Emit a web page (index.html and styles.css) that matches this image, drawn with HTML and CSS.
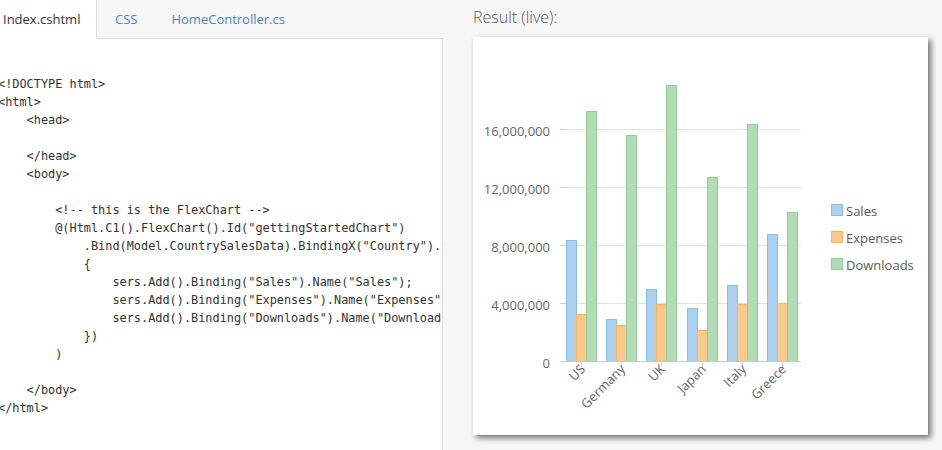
FILE: index.html
```html
<!DOCTYPE html>
<html>
<head>
<meta charset="utf-8">
<link rel="stylesheet" href="styles.css">
</head>
<body>
<div class="page">
  <section class="editor">
    <nav class="tabs">
      <span class="tab active">Index.cshtml</span>
      <span class="tab">CSS</span>
      <span class="tab">HomeController.cs</span>
      <span class="tab-fill"></span>
    </nav>
    <div class="code-panel">
<pre class="code">&lt;!DOCTYPE html&gt;
&lt;html&gt;
    &lt;head&gt;

    &lt;/head&gt;
    &lt;body&gt;

        &lt;!-- this is the FlexChart --&gt;
        @(Html.C1().FlexChart().Id("gettingStartedChart")
            .Bind(Model.CountrySalesData).BindingX("Country").Series(sers =&gt;
            {
                sers.Add().Binding("Sales").Name("Sales");
                sers.Add().Binding("Expenses").Name("Expenses");
                sers.Add().Binding("Downloads").Name("Downloads");
            })
        )

    &lt;/body&gt;
&lt;/html&gt;</pre>
    </div>
  </section>
  <section class="result">
    <h2 class="result-title">Result (live):</h2>
    <div class="chart-card">
      <svg class="chart" width="455" height="398" viewBox="0 0 455 398" xmlns="http://www.w3.org/2000/svg">
        <g class="grid">
          <line x1="87" y1="92.5" x2="328" y2="92.5"/>
          <line x1="87" y1="150.5" x2="328" y2="150.5"/>
          <line x1="87" y1="208.5" x2="328" y2="208.5"/>
          <line x1="87" y1="266.5" x2="328" y2="266.5"/>
        </g>
        <g class="yticks">
          <line x1="87" y1="92.5" x2="93" y2="92.5"/>
          <line x1="87" y1="150.5" x2="93" y2="150.5"/>
          <line x1="87" y1="208.5" x2="93" y2="208.5"/>
          <line x1="87" y1="266.5" x2="93" y2="266.5"/>
          <line x1="87" y1="324.5" x2="93" y2="324.5"/>
        </g>
        <g class="ylabels">
          <text x="77" y="98.5">16,000,000</text>
          <text x="77" y="156.5">12,000,000</text>
          <text x="77" y="214.5">8,000,000</text>
          <text x="77" y="272.5">4,000,000</text>
          <text x="77" y="330.5">0</text>
        </g>
        <g class="bars">
          <!-- US -->
          <rect class="s" x="93.5" y="203.5" width="10" height="121"/>
          <rect class="e" x="103.5" y="277.5" width="10" height="47"/>
          <rect class="d" x="113.5" y="74.5" width="10" height="250"/>
          <!-- Germany -->
          <rect class="s" x="133.5" y="282.5" width="10" height="42"/>
          <rect class="e" x="143.5" y="288.5" width="10" height="36"/>
          <rect class="d" x="153.5" y="98.5" width="10" height="226"/>
          <!-- UK -->
          <rect class="s" x="173.5" y="252.5" width="10" height="72"/>
          <rect class="e" x="183.5" y="267.5" width="10" height="57"/>
          <rect class="d" x="193.5" y="48.5" width="10" height="276"/>
          <!-- Japan -->
          <rect class="s" x="214.5" y="271.5" width="10" height="53"/>
          <rect class="e" x="224.5" y="293.5" width="10" height="31"/>
          <rect class="d" x="234.5" y="140.5" width="10" height="184"/>
          <!-- Italy -->
          <rect class="s" x="254.5" y="248.5" width="10" height="76"/>
          <rect class="e" x="264.5" y="267.5" width="10" height="57"/>
          <rect class="d" x="274.5" y="87.5" width="10" height="237"/>
          <!-- Greece -->
          <rect class="s" x="294.5" y="197.5" width="10" height="127"/>
          <rect class="e" x="304.5" y="266.5" width="10" height="58"/>
          <rect class="d" x="314.5" y="175.5" width="10" height="149"/>
        </g>
        <line class="axis" x1="87" y1="324.5" x2="328" y2="324.5"/>
        <g class="xticks">
          <line x1="108.5" y1="324" x2="108.5" y2="330"/>
          <line x1="148.5" y1="324" x2="148.5" y2="330"/>
          <line x1="188.5" y1="324" x2="188.5" y2="330"/>
          <line x1="229.5" y1="324" x2="229.5" y2="330"/>
          <line x1="269.5" y1="324" x2="269.5" y2="330"/>
          <line x1="309.5" y1="324" x2="309.5" y2="330"/>
        </g>
        <g class="xlabels">
          <text transform="translate(113 333) rotate(-45)">US</text>
          <text transform="translate(153 333) rotate(-45)">Germany</text>
          <text transform="translate(193 333) rotate(-45)">UK</text>
          <text transform="translate(234 333) rotate(-45)">Japan</text>
          <text transform="translate(274 333) rotate(-45)">Italy</text>
          <text transform="translate(314 333) rotate(-45)">Greece</text>
        </g>
        <g class="legend">
          <rect class="s" x="358.5" y="167.5" width="11" height="11"/>
          <text x="373" y="179">Sales</text>
          <rect class="e" x="358.5" y="194.5" width="11" height="11"/>
          <text x="373" y="206">Expenses</text>
          <rect class="d" x="358.5" y="221.5" width="11" height="11"/>
          <text x="373" y="233">Downloads</text>
        </g>
      </svg>
    </div>
  </section>
</div>
</body>
</html>
```
FILE: styles.css
```css
html, body {
  margin: 0;
  padding: 0;
  background: #f7f7f7;
  height: 100%;
  overflow: hidden;
}

.page {
  display: flex;
  height: 450px;
  font-family: "Open Sans", "Liberation Sans", sans-serif;
}

.editor {
  width: 443px;
  display: flex;
  flex-direction: column;
  flex: none;
}

.tabs {
  display: flex;
  height: 39px;
  flex: none;
  background: #f7f7f7;
}

.tab {
  display: flex;
  align-items: center;
  height: 38px;
  padding: 0 16px 0 18px;
  font-size: 13px;
  color: #4a86cf;
  border-bottom: 1px solid #dddddd;
}

.tab.active {
  width: 93px;
  padding: 0 0 0 3px;
  background: #ffffff;
  color: #333333;
  border-right: 1px solid #dddddd;
  border-bottom: 1px solid #ffffff;
}

.tab-fill {
  flex: 1;
  border-bottom: 1px solid #dddddd;
}

.code-panel {
  flex: 1;
  background: #ffffff;
  border-right: 1px solid #dddddd;
  overflow: hidden;
}

.code {
  margin: 36px 0 0 -2px;
  font-family: "DejaVu Sans Mono", "Liberation Mono", monospace;
  font-size: 11.88px;
  line-height: 18px;
  color: #333333;
  white-space: pre;
}

.result {
  flex: 1;
  padding-left: 30px;
  display: flex;
  flex-direction: column;
}

.result-title {
  margin: 5px 0 0 0;
  height: 32px;
  font-size: 16px;
  font-weight: 300;
  color: #555555;
  line-height: 24px;
}

.chart-card {
  width: 455px;
  height: 398px;
  background: #ffffff;
  box-shadow: 3px 3px 6px rgba(0, 0, 0, 0.55);
}

.chart {
  display: block;
  font-family: "Open Sans", "Liberation Sans", sans-serif;
  font-size: 13px;
}

.grid line {
  stroke: #e2e2e2;
  stroke-width: 1;
}

.yticks line,
.xticks line {
  stroke: #d0d0d0;
  stroke-width: 1;
}

.axis {
  stroke: #c8c8c8;
  stroke-width: 1;
}

.ylabels text {
  text-anchor: end;
  fill: #666666;
}

.xlabels text {
  text-anchor: end;
  fill: #666666;
}

.legend text {
  fill: #5a5a5a;
}

.s {
  fill: #acd1ee;
  stroke: #88bde6;
  stroke-width: 1;
}

.e {
  fill: #fcc98a;
  stroke: #fbb258;
  stroke-width: 1;
}

.d {
  fill: #b1dcb6;
  stroke: #90cd97;
  stroke-width: 1;
}
```
